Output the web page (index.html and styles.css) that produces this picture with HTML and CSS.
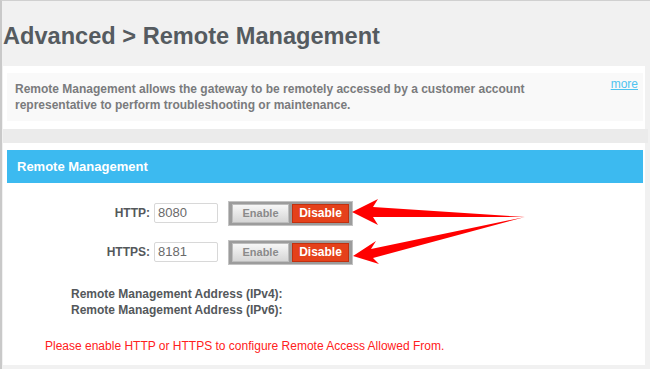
FILE: index.html
```html
<!DOCTYPE html>
<html>
<head>
<meta charset="utf-8">
<link rel="stylesheet" href="styles.css">
</head>
<body>
<div class="page">
  <h1 class="title">Advanced &gt; Remote Management</h1>
  <div class="info-outer">
    <div class="info-inner">
      <a class="more" href="#">more</a>
      <p class="info-text">Remote Management allows the gateway to be remotely accessed by a customer account representative to perform troubleshooting or maintenance.</p>
    </div>
  </div>
  <div class="gap"></div>
  <div class="panel">
    <div class="panel-head">Remote Management</div>
    <div class="form">
      <div class="row">
        <label class="lbl">HTTP:</label>
        <div class="input">8080</div>
        <div class="toggle">
          <span class="btn btn-enable">Enable</span>
          <span class="btn btn-disable">Disable</span>
        </div>
      </div>
      <div class="row">
        <label class="lbl">HTTPS:</label>
        <div class="input">8181</div>
        <div class="toggle">
          <span class="btn btn-enable">Enable</span>
          <span class="btn btn-disable">Disable</span>
        </div>
      </div>
      <div class="addr">
        <div>Remote Management Address (IPv4):</div>
        <div>Remote Management Address (IPv6):</div>
      </div>
      <p class="warn">Please enable HTTP or HTTPS to configure Remote Access Allowed From.</p>
    </div>
  </div>
  <svg class="arrows" width="650" height="369" viewBox="0 0 650 369">
    <polygon fill="#ff0000" points="352,212 378,199 373,207 525,217 373,217 378,225"/>
    <polygon fill="#ff0000" points="353,256 376,241 371,249 525,217 373,258 379,264"/>
  </svg>
</div>
</body>
</html>
```
FILE: styles.css
```css
html, body {
  margin: 0;
  padding: 0;
}
body {
  background: #f1f1f1;
  font-family: "Liberation Sans", Arial, sans-serif;
}
.page {
  position: relative;
  width: 650px;
  height: 369px;
  box-sizing: border-box;
  border-left: 2px solid #c9c9c9;
  border-top: 1px solid #d0d0d0;
  padding-left: 1px;
  overflow: hidden;
}
.title {
  margin: 0;
  padding-top: 21px;
  height: 65px;
  box-sizing: border-box;
  font-size: 23.6px;
  line-height: 28px;
  font-weight: bold;
  color: #555b60;
}
.info-outer {
  width: 642px;
  box-sizing: border-box;
  background: #ffffff;
  padding: 7px 2px 8px 4px;
}
.info-inner {
  background: #f9f9f9;
  padding: 8px 4px 8px 8px;
}
.info-text {
  margin: 0;
  font-size: 12px;
  line-height: 16px;
  font-weight: bold;
  color: #7a7b7d;
  padding-right: 100px;
}
.more {
  float: right;
  margin-top: -5px;
  margin-right: 1px;
  font-size: 12px;
  line-height: 16px;
  color: #4fc3f0;
  text-decoration: underline;
}
.gap {
  width: 645px;
  height: 14px;
  background: #ebebeb;
}
.panel {
  width: 642px;
  box-sizing: border-box;
  background: #ffffff;
  padding: 7px 2px 0 4px;
  height: 222px;
}
.panel-head {
  height: 33px;
  background: #3cbaf0;
  color: #ffffff;
  font-size: 13px;
  font-weight: bold;
  line-height: 33px;
  padding-left: 10px;
}
.form {
  padding-top: 15px;
}
.row {
  display: flex;
  align-items: center;
  height: 30px;
  margin-bottom: 9px;
}
.lbl {
  width: 143px;
  text-align: right;
  font-size: 12px;
  font-weight: bold;
  color: #54585b;
}
.input {
  margin-left: 4px;
  width: 64px;
  height: 20px;
  box-sizing: border-box;
  border: 1px solid #d8d8d8;
  border-radius: 2px;
  font-size: 13px;
  line-height: 18px;
  padding-left: 3px;
  color: #6a6a6a;
}
.toggle {
  margin-left: 10px;
  display: flex;
  gap: 3px;
  padding: 2px 3px;
  background: #9c9c9c;
  border: 1px solid #c3c3c3;
}
.btn {
  width: 57px;
  height: 19px;
  box-sizing: border-box;
  font-size: 11px;
  font-weight: bold;
  line-height: 17px;
  text-align: center;
}
.btn-enable {
  background: linear-gradient(#f7f7f7, #d6d6d6);
  border: 1px solid #bdbdbd;
  color: #8a8a8a;
}
.btn-disable {
  background: #e5411b;
  border: 1px solid #c2300f;
  color: #ffffff;
  font-size: 12px;
}
.addr {
  margin-top: 19px;
  margin-left: 64px;
  font-size: 12px;
  line-height: 16px;
  font-weight: bold;
  color: #54585b;
}
.warn {
  margin: 20px 0 0 38px;
  font-size: 12px;
  line-height: 16px;
  color: #ff2020;
}
.arrows {
  position: absolute;
  left: -2px;
  top: -1px;
}
```
